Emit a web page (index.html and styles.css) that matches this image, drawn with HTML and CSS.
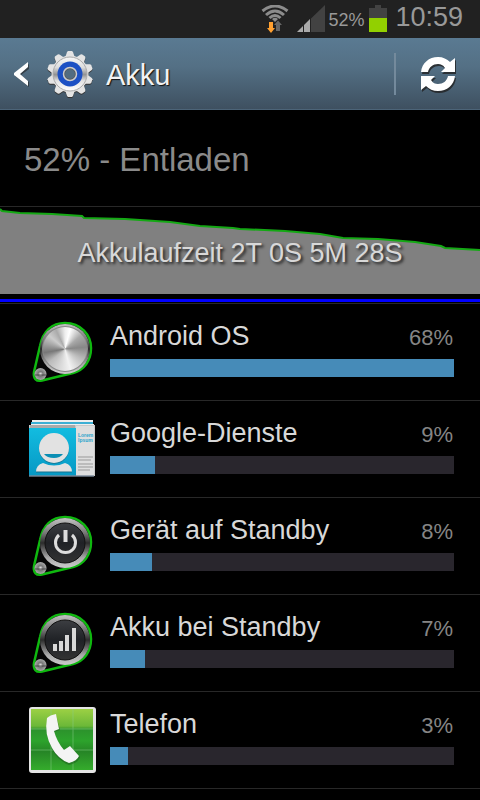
FILE: index.html
```html
<!DOCTYPE html>
<html lang="de">
<head>
    <meta charset="UTF-8">
    <meta name="viewport" content="width=device-width, initial-scale=1.0">
    <title>Akku</title>
    <link rel="stylesheet" href="styles.css">
</head>
<body>
    <div class="status-bar">
        <svg class="wifi" width="28" height="28" viewBox="0 0 28 28">
            <g fill="none" stroke="#8c8c8c" stroke-width="3">
                <path d="M1.500 6Q14-4 26.500 6"/>
                <path d="M5 10Q14 2 23 10"/>
                <path d="M8.500 13Q14 8 19.500 13"/>
            </g>
            <path d="M11 14Q14 11.500 17 14L14 17Z" fill="#8c8c8c"/>
            <path d="M8 17H12V23H14L10 28L6 23H8Z" fill="#ffa030"/>
            <path d="M15 26V20H13L17 15.500L21 20H19V26Z" fill="#666"/>
        </svg>
        <svg class="signal" width="28" height="28" viewBox="0 0 28 28">
            <path d="M28 0V27H0Z" fill="#424242"/>
            <path d="M0 27L6 21V27ZM7 27V20L13 14V27Z" fill="#aaa"/>
            <path d="M6 21V27H7V20ZM13 14V27H14V13Z" fill="#222"/>
        </svg>
        <span class="level">52%</span>
        <svg class="battery" width="18" height="28" viewBox="0 0 18 28">
            <path d="M6 0H12V3H18V27H0V3H6Z" fill="#424242"/>
            <path d="M0 13H18V27H0Z" fill="#92d000"/>
        </svg>
        <span class="clock">10:59</span>
    </div>

    <header class="title-bar">
        <button type="button" class="back" aria-label="Zurück">
            <svg width="18" height="26" viewBox="0 0 18 26">
                <path d="M16 3V8L8 14L16 21V26L2 15V13Z" fill="#222" opacity=".6"/>
                <path d="M15 1V6L7 13L15 20V25L1 14V12Z" fill="#fff"/>
            </svg>
        </button>
        <svg class="gear" width="46" height="48" viewBox="-23 -24 46 48">
            <defs>
                <linearGradient id="metal" x1="0" y1="0" x2="0" y2="1">
                    <stop offset="0" stop-color="#f8f8f8"/>
                    <stop offset=".3" stop-color="#dedede"/>
                    <stop offset=".52" stop-color="#929292"/>
                    <stop offset=".7" stop-color="#e2e2e2"/>
                    <stop offset="1" stop-color="#fff"/>
                </linearGradient>
                <path id="tooth" d="M-5-16L-3-22L-2-23H2L3-22L5-16Z"/>
                <g id="teeth">
                    <use href="#tooth"/>
                    <use href="#tooth" transform="rotate(36)"/>
                    <use href="#tooth" transform="rotate(72)"/>
                    <use href="#tooth" transform="rotate(108)"/>
                    <use href="#tooth" transform="rotate(144)"/>
                    <use href="#tooth" transform="rotate(180)"/>
                    <use href="#tooth" transform="rotate(216)"/>
                    <use href="#tooth" transform="rotate(252)"/>
                    <use href="#tooth" transform="rotate(288)"/>
                    <use href="#tooth" transform="rotate(324)"/>
                    <circle r="18.500"/>
                </g>
            </defs>
            <use href="#teeth" y="1" fill="#333"/>
            <use href="#teeth" fill="#e4e4e4"/>
            <circle r="17" fill="url(#metal)" stroke="#aaa"/>
            <circle r="12.500" fill="#1c50c4"/>
            <circle r="6.500" fill="#555" stroke="#ccc" stroke-width="1.500"/>
            <circle r="5" fill="#526c81"/>
        </svg>
        <h1>Akku</h1>
        <button type="button" class="refresh" aria-label="Aktualisieren">
            <svg width="36" height="38" viewBox="0 0 36 38">
                <defs>
                    <g id="arrows">
                        <path d="M0 15C1 6 8 0 17 0C22 0 26 2 29 5L34 1V15H20L24 11C22 8 20 7 17 7C12 7 8 10 7 15Z"/>
                        <path d="M34 19C33 28 26 34 17 34C12 34 8 32 5 29L0 33V19H14L10 23C12 26 14 27 17 27C22 27 26 24 27 19Z"/>
                    </g>
                </defs>
                <use href="#arrows" x="2" y="4" fill="#222" opacity=".8"/>
                <use href="#arrows" x="1" y="2" fill="#fff"/>
            </svg>
        </button>
    </header>

    <main>
        <h2 class="state">52% - Entladen</h2>
        <section class="history">
            <svg class="curve" viewBox="0 0 480 87" preserveAspectRatio="none">
                <path d="M0 2L2 4L20 6L52 7L82 9L84 11L125 12L170 15L200 19L233 21L240 22L285 24L320 27L343 31L378 32L415 35L441 39L445 41L480 43V87H0Z" fill="#808080"/>
                <path d="M0 2L2 4L20 6L52 7L82 9L84 11L125 12L170 15L200 19L233 21L240 22L285 24L320 27L343 31L378 32L415 35L441 39L445 41L480 43" fill="none" stroke="#14a814" stroke-width="2"/>
            </svg>
            <p>Akkulaufzeit 2T 0S 5M 28S</p>
        </section>

        <ul class="usage">
            <li>
                <svg class="icon" viewBox="0 0 68 68">
                    <defs>
                        <linearGradient id="rim" x1="0" y1="0" x2="0" y2="1">
                            <stop offset="0" stop-color="#c4c4c4"/>
                            <stop offset=".3" stop-color="#777"/>
                            <stop offset=".5" stop-color="#2c2c2c"/>
                            <stop offset=".8" stop-color="#aaa"/>
                            <stop offset="1" stop-color="#ccc"/>
                        </linearGradient>
                        <linearGradient id="dark" x1="0" y1="0" x2="0" y2="1">
                            <stop offset="0" stop-color="#3c3e42"/>
                            <stop offset=".5" stop-color="#202226"/>
                            <stop offset="1" stop-color="#333"/>
                        </linearGradient>
                        <radialGradient id="ball">
                            <stop offset="0" stop-color="#eee"/>
                            <stop offset=".4" stop-color="#777"/>
                            <stop offset="1" stop-color="#aaa"/>
                        </radialGradient>
                        <g id="badge">
                            <path d="M12 28C15 13 24 5 37 5C53 5 63 17 63 30C63 43 56 52 45 55L14 62.500C8 64 5 60 6 54Z" fill="#050505" stroke="#0fb80f" stroke-width="2.500"/>
                            <circle cx="37" cy="31" r="25" fill="url(#rim)"/>
                            <circle cx="12.500" cy="56" r="6" fill="url(#ball)"/>
                            <path d="M7 57H18" stroke="#333" stroke-width="1.500" opacity=".5"/>
                        </g>
                    </defs>
                    <use href="#badge"/>
                    <circle cx="37" cy="31" r="23" fill="#888"/>
                    <foreignObject x="15" y="9" width="44" height="44"><div class="disc"></div></foreignObject>
                </svg>
                <div class="entry">
                    <div class="label"><span>Android OS</span><span class="percent">68%</span></div>
                    <div class="bar"><div class="fill" style="width: 100%"></div></div>
                </div>
            </li>
            <li>
                <svg class="icon" viewBox="0 0 68 68">
                    <defs>
                        <linearGradient id="cyan" x1="0" y1="0" x2="0" y2="1">
                            <stop offset="0" stop-color="#12bce0"/>
                            <stop offset="1" stop-color="#0698c4"/>
                        </linearGradient>
                    </defs>
                    <path d="M4 5H65V10H67V61H1V10H4Z" fill="#c9c9c9"/>
                    <path d="M4 5H65V7H4Z" fill="#eee"/>
                    <path d="M3 7H65V9H3Z" fill="#3dafd4"/>
                    <path d="M3 9H66V10H3Z" fill="#eee"/>
                    <path d="M2 10H47V13H2Z" fill="#aaa"/>
                    <path d="M1 13H48V61H1Z" fill="url(#cyan)"/>
                    <path d="M48 11H66V61H48Z" fill="#dedede"/>
                    <path d="M1 60H66V62H1Z" fill="#789" opacity=".7"/>
                    <circle cx="26" cy="34" r="15" fill="#167e9c"/>
                    <circle cx="26" cy="33" r="15" fill="#e2e2e2"/>
                    <path d="M16 39H35Q32 43 26 43Q19 43 16 39Z" fill="#0b8eb4"/>
                    <path d="M8 57Q8 50 15 48Q26 53 37 48Q44 50 44 57Z" fill="#e2e2e2"/>
                    <path d="M8 57H44" stroke="#18718c"/>
                    <text x="50" y="22" class="card-text">Lorem</text>
                    <text x="50" y="27" class="card-text">Ipsum</text>
                    <path d="M50 42H65M50 45H63M50 49H65M50 52H65M50 55H62" stroke="#999" stroke-width="1"/>
                </svg>
                <div class="entry">
                    <div class="label"><span>Google-Dienste</span><span class="percent">9%</span></div>
                    <div class="bar"><div class="fill" style="width: 13.1%"></div></div>
                </div>
            </li>
            <li>
                <svg class="icon" viewBox="0 0 68 68">
                    <use href="#badge"/>
                    <circle cx="37" cy="31" r="20" fill="url(#dark)" stroke="#111"/>
                    <path d="M31 23A10 10 0 1 0 44 23" fill="none" stroke="#ddd" stroke-width="3"/>
                    <path d="M37.500 18V30" stroke="#ddd" stroke-width="4"/>
                </svg>
                <div class="entry">
                    <div class="label"><span>Gerät auf Standby</span><span class="percent">8%</span></div>
                    <div class="bar"><div class="fill" style="width: 12.2%"></div></div>
                </div>
            </li>
            <li>
                <svg class="icon" viewBox="0 0 68 68">
                    <use href="#badge"/>
                    <circle cx="37" cy="31" r="20" fill="url(#dark)" stroke="#111"/>
                    <path d="M25 35H29V42H25ZM31 32H35V42H31ZM37 26H41V42H37ZM44 19H48V42H44Z" fill="#d8d8d8"/>
                </svg>
                <div class="entry">
                    <div class="label"><span>Akku bei Standby</span><span class="percent">7%</span></div>
                    <div class="bar"><div class="fill" style="width: 10.2%"></div></div>
                </div>
            </li>
            <li>
                <svg class="icon" viewBox="0 0 68 68">
                    <defs>
                        <linearGradient id="green" x1="0" y1="0" x2="0" y2="1">
                            <stop offset="0" stop-color="#9cd044"/>
                            <stop offset=".28" stop-color="#6cb838"/>
                            <stop offset=".34" stop-color="#2c922c"/>
                            <stop offset=".52" stop-color="#2da32c"/>
                            <stop offset=".7" stop-color="#268526"/>
                            <stop offset="1" stop-color="#35ac2c"/>
                        </linearGradient>
                    </defs>
                    <rect x="1" y="1" width="67" height="66" rx="3" fill="#e4e4e4"/>
                    <rect x="3" y="3" width="62" height="61" fill="url(#green)"/>
                    <path d="M23 3V64M45 3V64M3 23H65M3 44H65" stroke="#8c8" opacity=".5"/>
                    <path d="M20 12L28 9L32 24L26 26Q29 37 36 45L42 41L52 51Q50 57 41 59Q30 55 24 43Q17 29 19 15Z" fill="#1c5c1c" opacity=".5"/>
                    <path d="M19 12Q22 9 28 8L31 23L26 25Q29 36 36 44L42 40L51 50Q49 55 41 57Q30 53 24 42Q16 28 19 12Z" fill="#f4f4f4"/>
                </svg>
                <div class="entry">
                    <div class="label"><span>Telefon</span><span class="percent">3%</span></div>
                    <div class="bar"><div class="fill" style="width: 5.2%"></div></div>
                </div>
            </li>
        </ul>
    </main>
</body>
</html>
```
FILE: styles.css
```css
* {
    box-sizing: border-box;
}
body {
    margin: 0;
    background-color: #000;
    color: #d8d8d8;
    font-family: "Liberation Sans", Arial, sans-serif;
    font-size: 27px;
}
h1, h2, p, ul {
    margin: 0;
    padding: 0;
    font-weight: normal;
}
svg {
    display: block;
    flex-shrink: 0;
}
button {
    padding: 0;
    border: none;
    background: none;
    cursor: pointer;
}
.status-bar {
    display: flex;
    justify-content: flex-end;
    height: 38px;
    padding: 5px 17px 0 0;
    background-color: #212121;
    color: #999;
}
.signal {
    margin-left: 8px;
}
.level {
    margin: 0 5px 0 3px;
    font-size: 18px;
    line-height: 30px;
}
.clock {
    margin-left: 8px;
    line-height: 24px;
}
.title-bar {
    display: flex;
    align-items: center;
    height: 72px;
    padding-left: 13px;
    border-bottom: 1px solid #4c6478;
    background: linear-gradient(#5a7a92, #547085 40%, #3e5060);
}
.gear {
    margin: 0 13px 0 16px;
}
.title-bar h1 {
    flex: 1;
    padding-top: 2px;
    color: #f2f2f2;
    font-size: 29px;
    line-height: 34px;
    text-shadow: 1px 1px 1px #111;
}
.refresh {
    height: 42px;
    padding: 0 24px;
    border-left: 2px solid #748a9c;
}
.state {
    padding: 32px 24px 28px;
    border-bottom: 1px solid #282828;
    color: #8a8a8a;
    font-size: 33px;
    line-height: 36px;
}
.history {
    display: grid;
    padding-bottom: 5px;
    border-bottom: 3px solid #0000ff;
}
.history .curve,
.history p {
    grid-area: 1 / 1;
}
.curve {
    width: 100%;
    height: 87px;
}
.history p {
    align-self: center;
    line-height: 30px;
    padding-top: 4px;
    text-align: center;
    text-shadow: 2px 2px 3px #222;
}
.usage {
    margin-top: 1px;
    border-top: 1px solid #282828;
    list-style: none;
}
.usage li {
    display: flex;
    height: 97px;
    padding: 14px 26px 0 28px;
    border-bottom: 1px solid #282828;
}
.icon {
    width: 68px;
    height: 68px;
}
.disc {
    width: 44px;
    height: 44px;
    border-radius: 50%;
    background: conic-gradient(#eee, #fff 15deg, #aaa 50deg, #888 85deg, #bbb 120deg, #f2f2f2 165deg, #ddd 190deg, #bbb 230deg, #777 260deg, #999 280deg, #ccc 310deg, #aaa 335deg, #eee);
}
.card-text {
    fill: #2aa4cc;
    font-size: 5px;
    font-weight: bold;
}
.entry {
    flex: 1;
    padding-top: 2px;
    margin-left: 14px;
}
.label {
    display: flex;
    justify-content: space-between;
    align-items: baseline;
    height: 32px;
    line-height: 32px;
}
.percent {
    padding-right: 1px;
    color: #858585;
    font-size: 22px;
}
.bar {
    height: 18px;
    margin-top: 7px;
    background-color: #29262d;
}
.fill {
    height: 100%;
    background-color: #468bb8;
}
```
